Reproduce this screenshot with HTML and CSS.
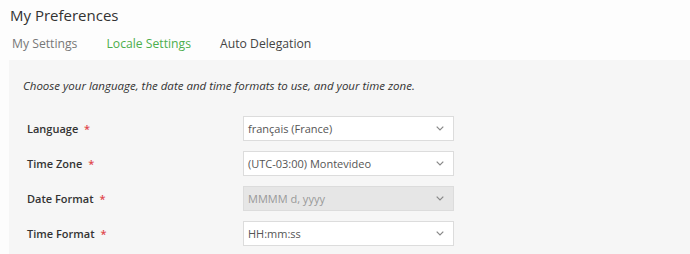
FILE: index.html
```html
<!DOCTYPE html>
<html>
<head>
<meta charset="utf-8">
<link rel="stylesheet" href="styles.css">
</head>
<body>
<div class="page">
  <h1 class="title">My Preferences</h1>
  <nav class="tabs">
    <span class="tab">My Settings</span>
    <span class="tab active">Locale Settings</span>
    <span class="tab dark">Auto Delegation</span>
  </nav>
  <section class="panel">
    <p class="desc">Choose your language, the date and time formats to use, and your time zone.</p>
    <div class="form">
      <div class="row">
        <label class="label">Language <span class="req">*</span></label>
        <div class="select"><span>français (France)</span><svg class="chev" viewBox="0 0 8 5" width="8" height="5"><path d="M0.7 0.7 L4 4 L7.3 0.7" fill="none" stroke="#888" stroke-width="1.2"/></svg></div>
      </div>
      <div class="row">
        <label class="label">Time Zone <span class="req">*</span></label>
        <div class="select"><span>(UTC-03:00) Montevideo</span><svg class="chev" viewBox="0 0 8 5" width="8" height="5"><path d="M0.7 0.7 L4 4 L7.3 0.7" fill="none" stroke="#888" stroke-width="1.2"/></svg></div>
      </div>
      <div class="row">
        <label class="label">Date Format <span class="req">*</span></label>
        <div class="select disabled"><span>MMMM d, yyyy</span><svg class="chev" viewBox="0 0 8 5" width="8" height="5"><path d="M0.7 0.7 L4 4 L7.3 0.7" fill="none" stroke="#888" stroke-width="1.2"/></svg></div>
      </div>
      <div class="row">
        <label class="label">Time Format <span class="req">*</span></label>
        <div class="select"><span>HH:mm:ss</span><svg class="chev" viewBox="0 0 8 5" width="8" height="5"><path d="M0.7 0.7 L4 4 L7.3 0.7" fill="none" stroke="#888" stroke-width="1.2"/></svg></div>
      </div>
    </div>
  </section>
</div>
</body>
</html>
```
FILE: styles.css
```css
html, body {
  margin: 0;
  padding: 0;
  background: #fdfdfd;
  font-family: "Open Sans", "Noto Sans", sans-serif;
  color: #333;
}
.page {
  display: flex;
  flex-direction: column;
  height: 254px;
}
.title {
  margin: 0;
  padding: 4px 0 0 10px;
  font-size: 15px;
  font-weight: 400;
  line-height: 22px;
  color: #333;
}
.tabs {
  display: flex;
  gap: 29px;
  padding: 9px 0 0 12px;
  height: 25px;
  font-size: 12.2px;
  line-height: 18px;
}
.tab { color: #777; }
.tab.active { color: #4cae4c; }
.tab.dark { color: #444; }
.panel {
  margin-left: 9px;
  background: #f6f6f6;
  flex: 1;
  padding: 18px 0 0 14px;
}
.desc {
  margin: 0;
  font-style: italic;
  font-size: 11.5px;
  line-height: 16px;
  color: #333;
}
.form {
  display: flex;
  flex-direction: column;
  gap: 10px;
  padding: 22px 0 0 4px;
}
.row {
  display: grid;
  grid-template-columns: 216px 211px;
  align-items: center;
}
.label {
  font-size: 11px;
  font-weight: 600;
  color: #333;
}
.req { color: #e0474c; margin-left: 3px; }
.select {
  box-sizing: border-box;
  height: 25px;
  background: #fff;
  border: 1px solid #dcdcdc;
  display: flex;
  align-items: center;
  justify-content: space-between;
  padding: 0 9px 0 4px;
  font-size: 11px;
  color: #555;
}
.select.disabled {
  background: #e6e6e6;
  color: #999;
}
.chev { display: block; }
```
